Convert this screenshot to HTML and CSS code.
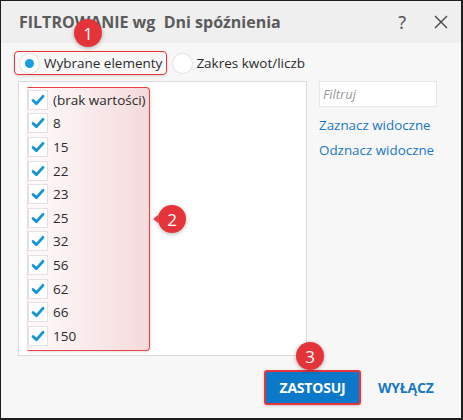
FILE: index.html
```html
<!DOCTYPE html>
<html lang="pl">
<head>
<meta charset="utf-8">
<link rel="stylesheet" href="styles.css">
</head>
<body>
<div class="window">
  <div class="header">
    <div class="title">FILTROWANIE wg&nbsp; Dni spóźnienia</div>
    <div class="hicons">
      <span class="help">?</span>
      <svg class="close" width="14" height="14" viewBox="0 0 14 14"><path d="M1 1L13 13M13 1L1 13" stroke="#444" stroke-width="1.4" fill="none"/></svg>
    </div>
  </div>
  <div class="content">
    <div class="radios">
      <label class="radio hl">
        <span class="rcircle on"></span>
        <span>Wybrane elementy</span>
      </label>
      <label class="radio">
        <span class="rcircle"></span>
        <span>Zakres kwot/liczb</span>
      </label>
    </div>
    <div class="main">
      <div class="list">
        <div class="mark2"></div>
        <div class="item"><span class="cb"><svg viewBox="0 0 20 20" width="20" height="20"><path d="M4.5 10.5L8.3 14L15.5 6" stroke="#1495d8" stroke-width="3.2" fill="none" stroke-linecap="round" stroke-linejoin="round"/></svg></span>(brak wartości)</div>
        <div class="item"><span class="cb"><svg viewBox="0 0 20 20" width="20" height="20"><path d="M4.5 10.5L8.3 14L15.5 6" stroke="#1495d8" stroke-width="3.2" fill="none" stroke-linecap="round" stroke-linejoin="round"/></svg></span>8</div>
        <div class="item"><span class="cb"><svg viewBox="0 0 20 20" width="20" height="20"><path d="M4.5 10.5L8.3 14L15.5 6" stroke="#1495d8" stroke-width="3.2" fill="none" stroke-linecap="round" stroke-linejoin="round"/></svg></span>15</div>
        <div class="item"><span class="cb"><svg viewBox="0 0 20 20" width="20" height="20"><path d="M4.5 10.5L8.3 14L15.5 6" stroke="#1495d8" stroke-width="3.2" fill="none" stroke-linecap="round" stroke-linejoin="round"/></svg></span>22</div>
        <div class="item"><span class="cb"><svg viewBox="0 0 20 20" width="20" height="20"><path d="M4.5 10.5L8.3 14L15.5 6" stroke="#1495d8" stroke-width="3.2" fill="none" stroke-linecap="round" stroke-linejoin="round"/></svg></span>23</div>
        <div class="item"><span class="cb"><svg viewBox="0 0 20 20" width="20" height="20"><path d="M4.5 10.5L8.3 14L15.5 6" stroke="#1495d8" stroke-width="3.2" fill="none" stroke-linecap="round" stroke-linejoin="round"/></svg></span>25</div>
        <div class="item"><span class="cb"><svg viewBox="0 0 20 20" width="20" height="20"><path d="M4.5 10.5L8.3 14L15.5 6" stroke="#1495d8" stroke-width="3.2" fill="none" stroke-linecap="round" stroke-linejoin="round"/></svg></span>32</div>
        <div class="item"><span class="cb"><svg viewBox="0 0 20 20" width="20" height="20"><path d="M4.5 10.5L8.3 14L15.5 6" stroke="#1495d8" stroke-width="3.2" fill="none" stroke-linecap="round" stroke-linejoin="round"/></svg></span>56</div>
        <div class="item"><span class="cb"><svg viewBox="0 0 20 20" width="20" height="20"><path d="M4.5 10.5L8.3 14L15.5 6" stroke="#1495d8" stroke-width="3.2" fill="none" stroke-linecap="round" stroke-linejoin="round"/></svg></span>62</div>
        <div class="item"><span class="cb"><svg viewBox="0 0 20 20" width="20" height="20"><path d="M4.5 10.5L8.3 14L15.5 6" stroke="#1495d8" stroke-width="3.2" fill="none" stroke-linecap="round" stroke-linejoin="round"/></svg></span>66</div>
        <div class="item"><span class="cb"><svg viewBox="0 0 20 20" width="20" height="20"><path d="M4.5 10.5L8.3 14L15.5 6" stroke="#1495d8" stroke-width="3.2" fill="none" stroke-linecap="round" stroke-linejoin="round"/></svg></span>150</div>
      </div>
      <div class="side">
        <div class="filter">Filtruj</div>
        <a class="link">Zaznacz widoczne</a>
        <a class="link">Odznacz widoczne</a>
      </div>
    </div>
    <div class="footer">
      <button class="apply">ZASTOSUJ</button>
      <button class="off">WYŁĄCZ</button>
    </div>
  </div>
  <div class="badge b1">1</div>
  <div class="badge b2">2</div>
  <div class="badge b3">3</div>
</div>
</body>
</html>
```
FILE: styles.css
```css
* { box-sizing: border-box; }
html, body { margin: 0; padding: 0; }
body {
  width: 463px;
  height: 420px;
  font-family: "Open Sans", "Noto Sans", sans-serif;
  background: #f7f7f7;
}
.window {
  position: relative;
  width: 463px;
  height: 420px;
  border-style: solid;
  border-color: #1e1e1e;
  border-width: 1px 2px 2px 1px;
  background: #f7f7f7;
  display: flex;
  flex-direction: column;
}
.header {
  height: 42px;
  background: #efefef;
  display: flex;
  align-items: center;
  justify-content: space-between;
  padding: 0 13px 0 18px;
}
.title {
  font-size: 16px;
  font-weight: 700;
  color: #5b5b5b;
  letter-spacing: 0;
}
.hicons {
  display: flex;
  align-items: center;
  gap: 28px;
}
.help {
  font-size: 18px;
  color: #555;
  font-family: "Noto Sans", sans-serif;
}
.close { display: block; }
.content {
  flex: 1;
  display: flex;
  flex-direction: column;
  padding: 8px 0 0 0;
}
.radios {
  display: flex;
  align-items: center;
  gap: 2px;
  height: 24px;
  padding-left: 13px;
}
.radio {
  display: flex;
  align-items: center;
  gap: 5px;
  height: 24px;
  font-size: 13.5px;
  color: #2a2a2a;
  padding: 0 4px 0 5px;
  border: 1.5px solid transparent;
  border-radius: 4px;
}
.radio + .radio { padding-left: 3px; gap: 4px; }
.radio.hl {
  border-color: #e8343a;
  box-shadow: 0 1px 3px rgba(0,0,0,0.15);
}
.rcircle {
  width: 19px;
  height: 19px;
  border-radius: 50%;
  background: #fff;
  box-shadow: 0 0 0 1px #e4e4e4;
  display: flex;
  align-items: center;
  justify-content: center;
}
.rcircle.on::after {
  content: "";
  width: 9px;
  height: 9px;
  border-radius: 50%;
  background: #1a9ee2;
}
.main {
  display: flex;
  margin-top: 6px;
  padding-left: 17px;
}
.list {
  position: relative;
  width: 289px;
  height: 275px;
  background: #fff;
  border: 1px solid #dcdcdc;
  padding: 6px 0 0 9px;
}
.mark2 {
  position: absolute;
  left: 8px;
  top: 5px;
  width: 123px;
  height: 264px;
  border: 1.5px solid #ec4046;
  border-left-color: transparent;
  border-radius: 0 4px 4px 0;
  background: linear-gradient(to right, rgba(250,235,235,0.2), rgba(240,205,207,0.75));
  box-shadow: 1px 1px 3px rgba(0,0,0,0.12);
}
.item {
  position: relative;
  display: flex;
  align-items: center;
  height: 23.6px;
  font-size: 13.5px;
  color: #2a2a2a;
  gap: 5px;
}
.cb {
  width: 20px;
  height: 20px;
  border: 1px solid #e2e2e2;
  background: #fff;
  display: flex;
  align-items: center;
  justify-content: center;
  flex: none;
}
.cb svg { display: block; }
.side {
  margin-left: 12px;
  display: flex;
  flex-direction: column;
  width: 118px;
}
.filter {
  height: 26px;
  background: #fff;
  border: 1px solid #e6e6e6;
  font-size: 13px;
  font-style: italic;
  color: #9a9a9a;
  padding: 3px 0 0 3px;
}
.link {
  font-size: 13.4px;
  color: #1a78c2;
  margin-top: 10px;
  line-height: 17px;
  white-space: nowrap;
}
.link + .link { margin-top: 8px; }
.footer {
  display: flex;
  align-items: center;
  padding-left: 263px;
  margin-top: 14px;
  gap: 17px;
}
.apply {
  width: 97px;
  height: 35px;
  background: #0b78c9;
  border: 2px solid #e9343a;
  border-radius: 3px;
  color: #fff;
  font-family: "Open Sans", sans-serif;
  font-weight: 700;
  font-size: 14px;
  letter-spacing: -0.2px;
  box-shadow: 0 1px 3px rgba(0,0,0,0.2);
  padding: 0;
}
.off {
  background: none;
  border: none;
  color: #1a78c2;
  font-family: "Open Sans", sans-serif;
  font-weight: 700;
  font-size: 14px;
  letter-spacing: -0.2px;
  padding: 0;
}
.badge {
  position: absolute;
  width: 28px;
  height: 28px;
  border-radius: 50%;
  background: #e5333a;
  color: #fff;
  font-family: "Open Sans", sans-serif;
  font-size: 17px;
  display: flex;
  align-items: center;
  justify-content: center;
  box-shadow: 0 1px 4px rgba(0,0,0,0.3);
}
.b1 { left: 73px; top: 18px; }
.b2 { left: 157px; top: 204px; }
.b2::before {
  content: "";
  position: absolute;
  left: -9px;
  top: 10px;
  border: 4px solid transparent;
  border-right: 5px solid #ec4046;
}
.b3 { left: 295px; top: 341px; }
```
